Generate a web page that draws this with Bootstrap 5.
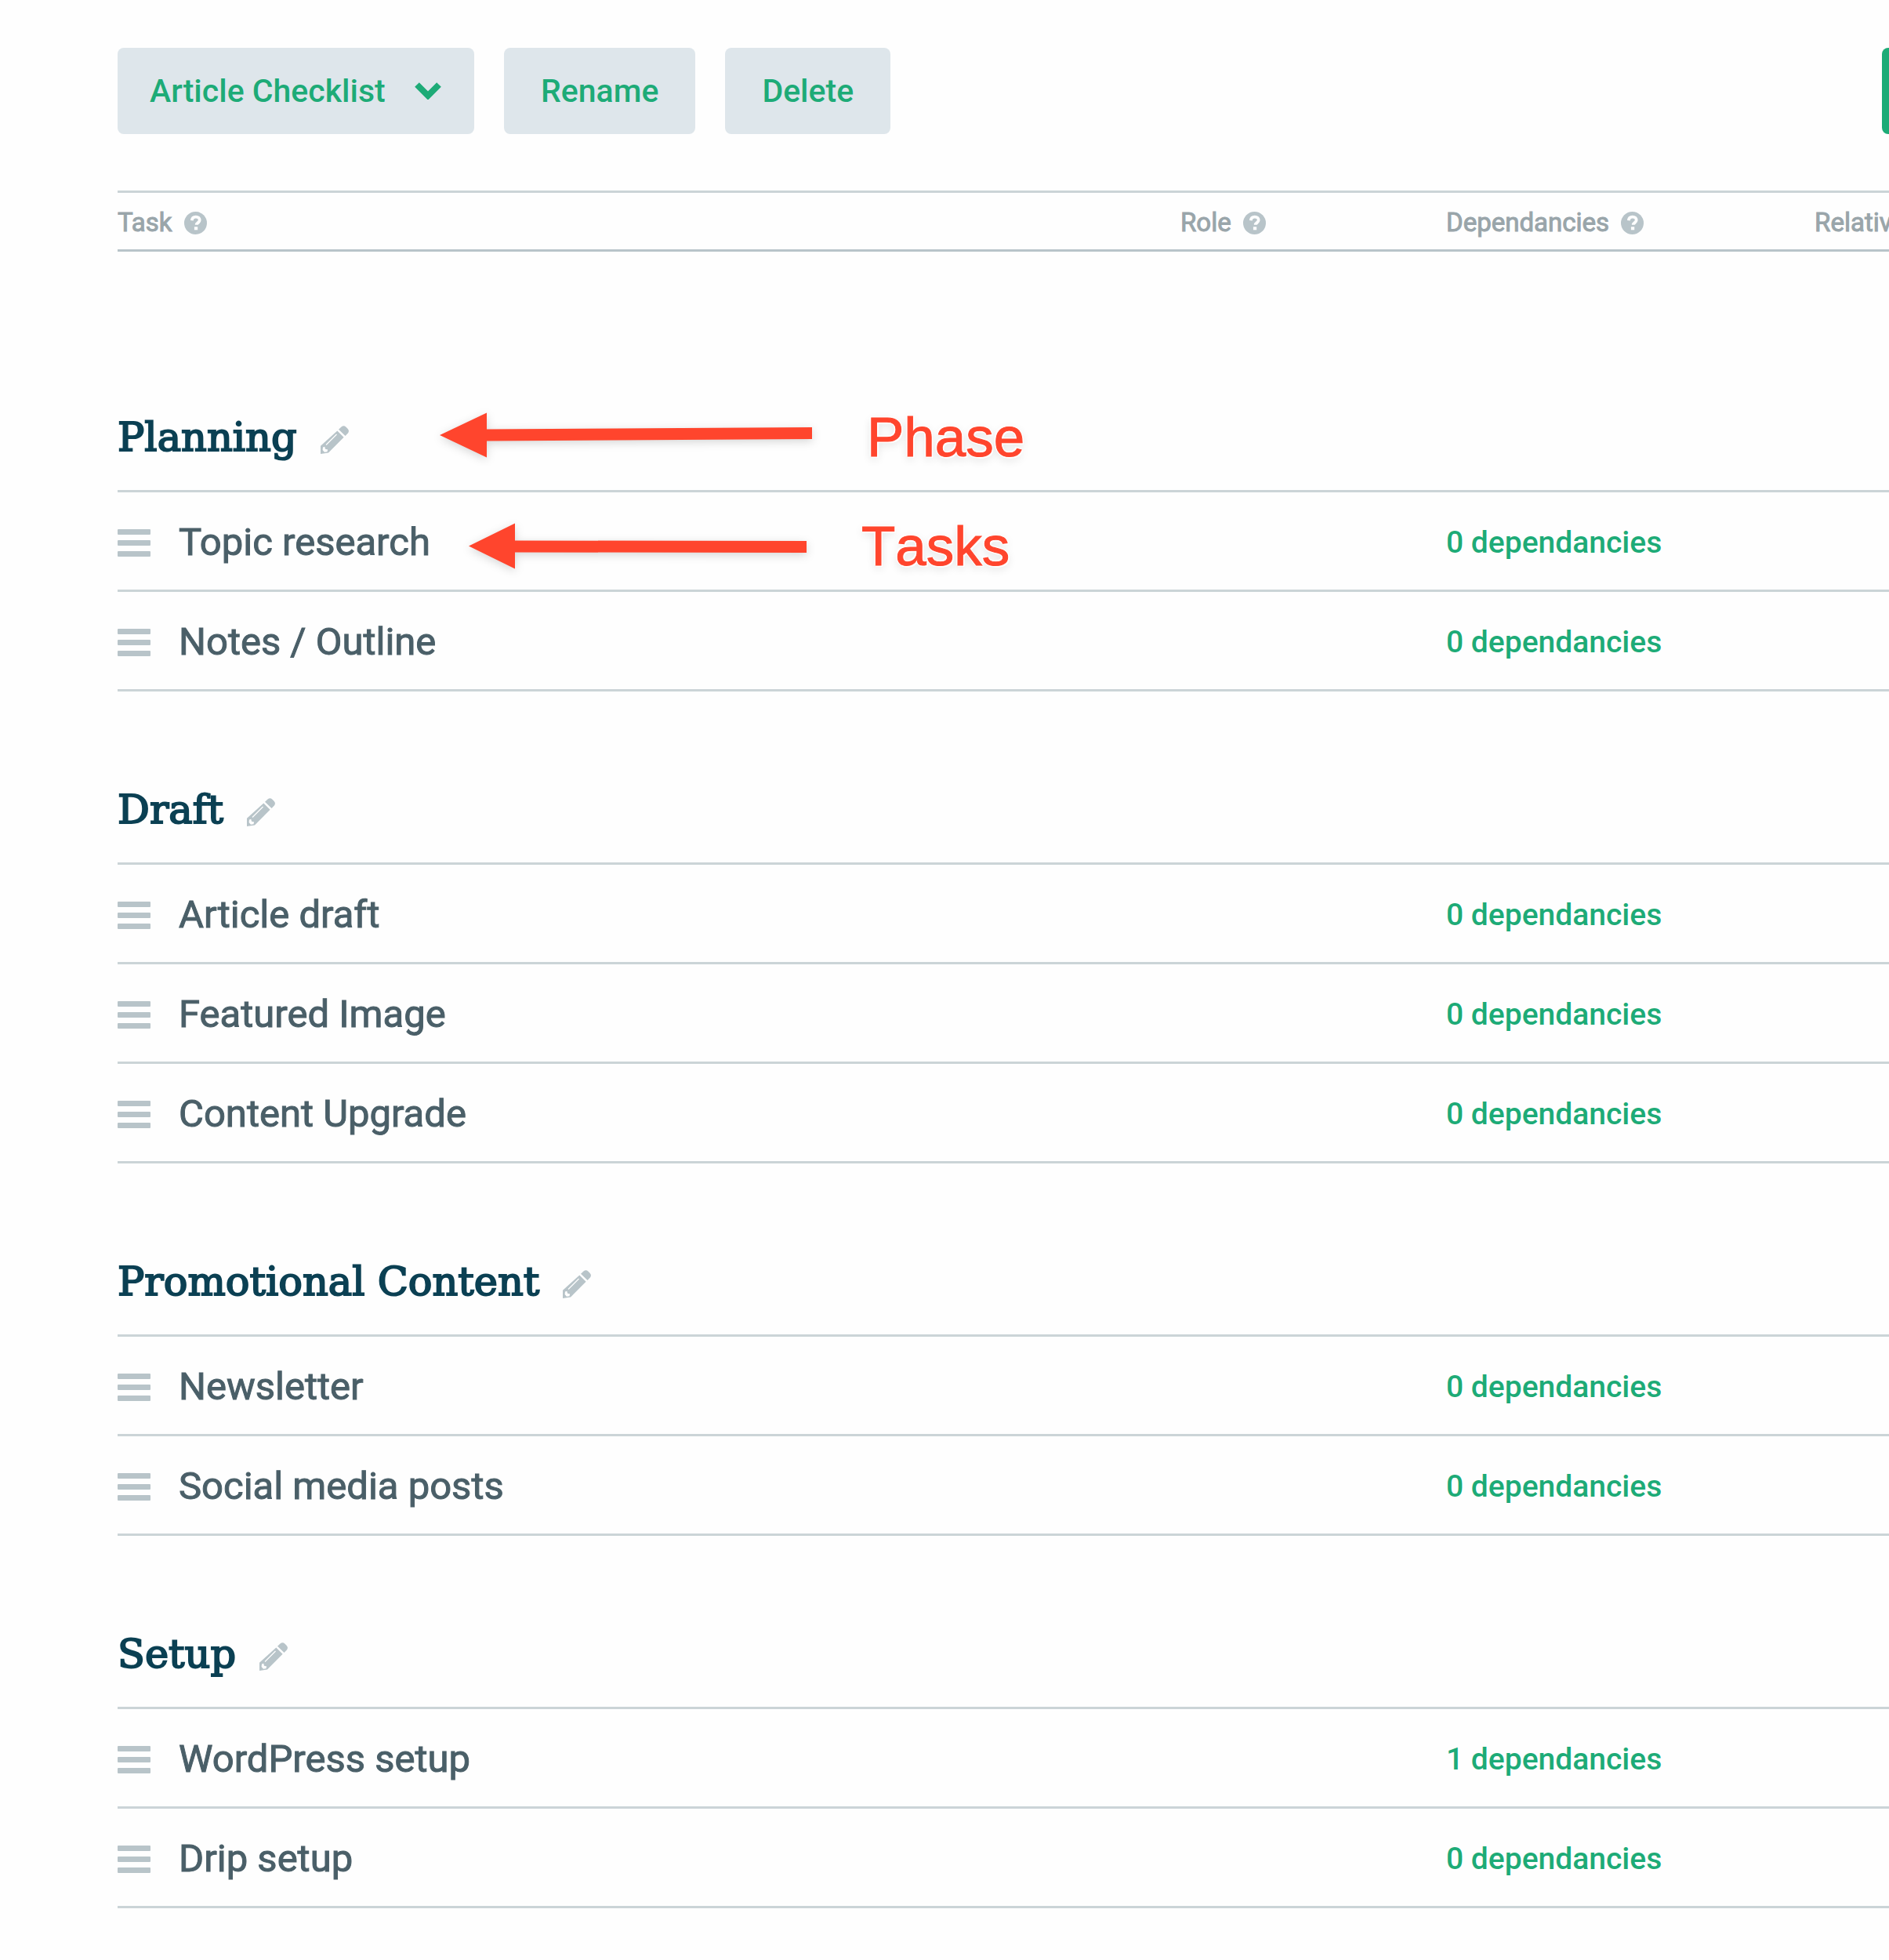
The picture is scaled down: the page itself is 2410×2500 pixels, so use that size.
<!DOCTYPE html>
<html lang="en">
<head>
<meta charset="utf-8">
<meta name="viewport" content="width=device-width, initial-scale=1">
<title>Article Checklist</title>
<link href="https://cdn.jsdelivr.net/npm/bootstrap@5.3.0/dist/css/bootstrap.min.css" rel="stylesheet">
<style>
  :root { --green: #1dab77; --line: #cbd4d7; --icon: #b8c4c9; --ink: #4a5f68; --navy: #0b4053; --red: #ff452d; }
  body { background: #fefefe; color: var(--ink); font-family: Roboto, "Liberation Sans", sans-serif; overflow-x: hidden; }
  .checklist-page { padding: 61px 0 0 150px; }
  .toolbar { gap: 38px; margin-bottom: 72px; }
  .tool { height: 110px; border: 0; border-radius: 8px; background-color: #dee6eb; color: var(--green); font-size: 41px; font-weight: 500; line-height: 60px; padding: 0 47px; }
  .tool:hover { background-color: #d2dde3; color: var(--green); }
  .tool-select { width: auto; padding: 0 113px 0 41px; background-repeat: no-repeat; background-position: right 42px center; background-size: 34px 22px;
    background-image: url("data:image/svg+xml,%3Csvg xmlns='http://www.w3.org/2000/svg' viewBox='0 0 34 22'%3E%3Cpath d='M3 3l14 14L31 3' fill='none' stroke='%231dab77' stroke-width='8'/%3E%3C/svg%3E"); }
  .tool-edge { width: 9px; height: 110px; padding: 0; border: 0; border-radius: 8px 0 0 8px; background: var(--green); }

  .task-table { width: 100%; table-layout: fixed; border-collapse: separate; border-spacing: 0; }
  .col-task { width: 60%; } .col-role { width: 15%; } .col-deps { width: 20.8%; }
  .task-table thead th { border-top: 3px solid var(--line); border-bottom: 3px solid var(--icon); padding: 18px 0 14px; font-size: 33px; font-weight: 400; line-height: 40px; color: #99a5aa; -webkit-text-stroke: 1px #99a5aa; white-space: nowrap; overflow: hidden; }
  .help { width: 29px; height: 29px; margin-left: 15px; }
  .phase-cell { border-bottom: 3px solid var(--line); padding: 121px 0 37px; }
  .phase-first .phase-cell { padding-top: 207px; }
  .phase-name { font-family: "DejaVu Serif", serif; font-size: 51px; font-weight: 400; line-height: 60px; color: var(--navy); -webkit-text-stroke: 2px var(--navy); }
  .task-row td { border-bottom: 3px solid var(--line); padding: 34px 0 30px; line-height: 60px; }
  .task-name { font-size: 49px; margin-left: 36px; -webkit-text-stroke: 1px var(--ink); }
  .dep-link { display: block; font-size: 39px; font-weight: 500; color: var(--green); text-decoration: none; }
  .dep-link:hover { color: #158a5f; }
  .icon-btn { border: 0; background: none; padding: 0; line-height: 1; color: var(--icon); display: flex; }
  .icon-btn svg { display: block; }
  .edit { margin: 6px 0 0 30px; }

  /* callouts drawn over the list */
  .callout-note { position: absolute; display: flex; gap: 70px; white-space: nowrap; color: var(--red); }
  .note-phase { left: 411px; top: 0; }
  .note-tasks { left: 448px; top: 5px; }
  .callout-note svg { overflow: visible; filter: drop-shadow(0 3px 6px rgba(0,0,0,.16)); }
  .note-text { font: 400 71px/60px "Liberation Sans", sans-serif; font-kerning: none; -webkit-text-stroke: 1px var(--red);
    text-shadow: 2px 0 #fff, -2px 0 #fff, 0 2px #fff, 0 -2px #fff, 2px 2px #fff, -2px -2px #fff, 0 4px 12px rgba(0,0,0,.15); }
</style>
</head>
<body>
<svg class="d-none" aria-hidden="true">
  <symbol id="i-help" viewBox="0 0 29 29"><circle cx="14.5" cy="14.5" r="14.5" fill="#b8c4c9"/><path d="M9.8 11.2c.3-3 2.2-4.5 5-4.5 2.900 0 4.900 1.600 4.900 4.100 0 3.300-4 3.300-4 6" fill="none" stroke="#fefefe" stroke-width="3.800"/><rect x="12.900" y="19.300" width="4.300" height="4" fill="#fefefe"/></symbol>
  <symbol id="i-pencil" viewBox="0 0 36 36"><path fill="currentColor" d="M26.500 1.500a4.500 4.500 0 0 1 6 .3l2 2a4.500 4.500 0 0 1 .2 6L31.500 13 23 4.700z"/><path fill="currentColor" d="M21.300 6.500l8.300 8.300L10 34.500 0 36V25.800z"/><path d="M20.500 11L7 24.500" stroke="#fefefe" stroke-width="1.300"/><path d="M3 27.500l2.300-.8.700 3 3.200.9-.8 2.600-3.400.6L2.600 31z" fill="#fefefe"/></symbol>
  <symbol id="i-drag" viewBox="0 0 42 35"><g fill="currentColor"><rect width="42" height="7" rx="1"/><rect y="14" width="42" height="7" rx="1"/><rect y="28" width="42" height="7" rx="1"/></g></symbol>
</svg>

<main class="checklist-page">
  <div class="toolbar d-flex align-items-center">
    <select class="form-select tool tool-select" aria-label="Checklist template"><option>Article Checklist</option></select>
    <button type="button" class="btn tool">Rename</button>
    <button type="button" class="btn tool">Delete</button>
    <button type="button" class="btn tool-edge ms-auto" aria-label="Add"></button>
  </div>

  <table class="task-table">
    <colgroup><col class="col-task"><col class="col-role"><col class="col-deps"><col></colgroup>
    <thead>
      <tr>
        <th scope="col"><div class="d-flex align-items-center">Task<svg class="help"><use href="#i-help"/></svg></div></th>
        <th scope="col"><div class="d-flex align-items-center">Role<svg class="help"><use href="#i-help"/></svg></div></th>
        <th scope="col"><div class="d-flex align-items-center">Dependancies<svg class="help"><use href="#i-help"/></svg></div></th>
        <th scope="col">Relativ</th>
      </tr>
    </thead>
    <tbody class="phase-first">
      <tr><th colspan="4" class="phase-cell"><div class="position-relative d-flex align-items-center">
        <h2 class="phase-name m-0">Planning</h2>
        <button type="button" class="icon-btn edit" aria-label="Edit phase"><svg width="36" height="36"><use href="#i-pencil"/></svg></button>
        <div class="callout-note note-phase">
          <svg width="475" height="60"><path fill="currentColor" d="M0 27L60 -1.500V19.500L475 17V32L60 34.500V55.500z"/></svg>
          <span class="note-text">Phase</span>
        </div>
      </div></th></tr>
      <tr class="task-row"><td><div class="position-relative d-flex align-items-center">
        <button type="button" class="icon-btn" aria-label="Reorder"><svg width="42" height="35"><use href="#i-drag"/></svg></button>
        <span class="task-name">Topic research</span>
        <div class="callout-note note-tasks">
          <svg width="431" height="60"><path fill="currentColor" d="M0 29.500L59 .5V22.500L431 23V38L59 37.500V58.500z"/></svg>
          <span class="note-text">Tasks</span>
        </div>
      </div></td><td></td><td><a class="dep-link" href="#">0 dependancies</a></td><td></td></tr>
      <tr class="task-row"><td><div class="d-flex align-items-center"><button type="button" class="icon-btn" aria-label="Reorder"><svg width="42" height="35"><use href="#i-drag"/></svg></button><span class="task-name">Notes / Outline</span></div></td><td></td><td><a class="dep-link" href="#">0 dependancies</a></td><td></td></tr>
    </tbody>
    <tbody>
      <tr><th colspan="4" class="phase-cell"><div class="d-flex align-items-center">
        <h2 class="phase-name m-0">Draft</h2>
        <button type="button" class="icon-btn edit" aria-label="Edit phase"><svg width="36" height="36"><use href="#i-pencil"/></svg></button>
      </div></th></tr>
      <tr class="task-row"><td><div class="d-flex align-items-center"><button type="button" class="icon-btn" aria-label="Reorder"><svg width="42" height="35"><use href="#i-drag"/></svg></button><span class="task-name">Article draft</span></div></td><td></td><td><a class="dep-link" href="#">0 dependancies</a></td><td></td></tr>
      <tr class="task-row"><td><div class="d-flex align-items-center"><button type="button" class="icon-btn" aria-label="Reorder"><svg width="42" height="35"><use href="#i-drag"/></svg></button><span class="task-name">Featured Image</span></div></td><td></td><td><a class="dep-link" href="#">0 dependancies</a></td><td></td></tr>
      <tr class="task-row"><td><div class="d-flex align-items-center"><button type="button" class="icon-btn" aria-label="Reorder"><svg width="42" height="35"><use href="#i-drag"/></svg></button><span class="task-name">Content Upgrade</span></div></td><td></td><td><a class="dep-link" href="#">0 dependancies</a></td><td></td></tr>
    </tbody>
    <tbody>
      <tr><th colspan="4" class="phase-cell"><div class="d-flex align-items-center">
        <h2 class="phase-name m-0">Promotional Content</h2>
        <button type="button" class="icon-btn edit" aria-label="Edit phase"><svg width="36" height="36"><use href="#i-pencil"/></svg></button>
      </div></th></tr>
      <tr class="task-row"><td><div class="d-flex align-items-center"><button type="button" class="icon-btn" aria-label="Reorder"><svg width="42" height="35"><use href="#i-drag"/></svg></button><span class="task-name">Newsletter</span></div></td><td></td><td><a class="dep-link" href="#">0 dependancies</a></td><td></td></tr>
      <tr class="task-row"><td><div class="d-flex align-items-center"><button type="button" class="icon-btn" aria-label="Reorder"><svg width="42" height="35"><use href="#i-drag"/></svg></button><span class="task-name">Social media posts</span></div></td><td></td><td><a class="dep-link" href="#">0 dependancies</a></td><td></td></tr>
    </tbody>
    <tbody>
      <tr><th colspan="4" class="phase-cell"><div class="d-flex align-items-center">
        <h2 class="phase-name m-0">Setup</h2>
        <button type="button" class="icon-btn edit" aria-label="Edit phase"><svg width="36" height="36"><use href="#i-pencil"/></svg></button>
      </div></th></tr>
      <tr class="task-row"><td><div class="d-flex align-items-center"><button type="button" class="icon-btn" aria-label="Reorder"><svg width="42" height="35"><use href="#i-drag"/></svg></button><span class="task-name">WordPress setup</span></div></td><td></td><td><a class="dep-link" href="#">1 dependancies</a></td><td></td></tr>
      <tr class="task-row"><td><div class="d-flex align-items-center"><button type="button" class="icon-btn" aria-label="Reorder"><svg width="42" height="35"><use href="#i-drag"/></svg></button><span class="task-name">Drip setup</span></div></td><td></td><td><a class="dep-link" href="#">0 dependancies</a></td><td></td></tr>
    </tbody>
  </table>
</main>
<script src="https://cdn.jsdelivr.net/npm/bootstrap@5.3.0/dist/js/bootstrap.bundle.min.js"></script>
</body>
</html>
